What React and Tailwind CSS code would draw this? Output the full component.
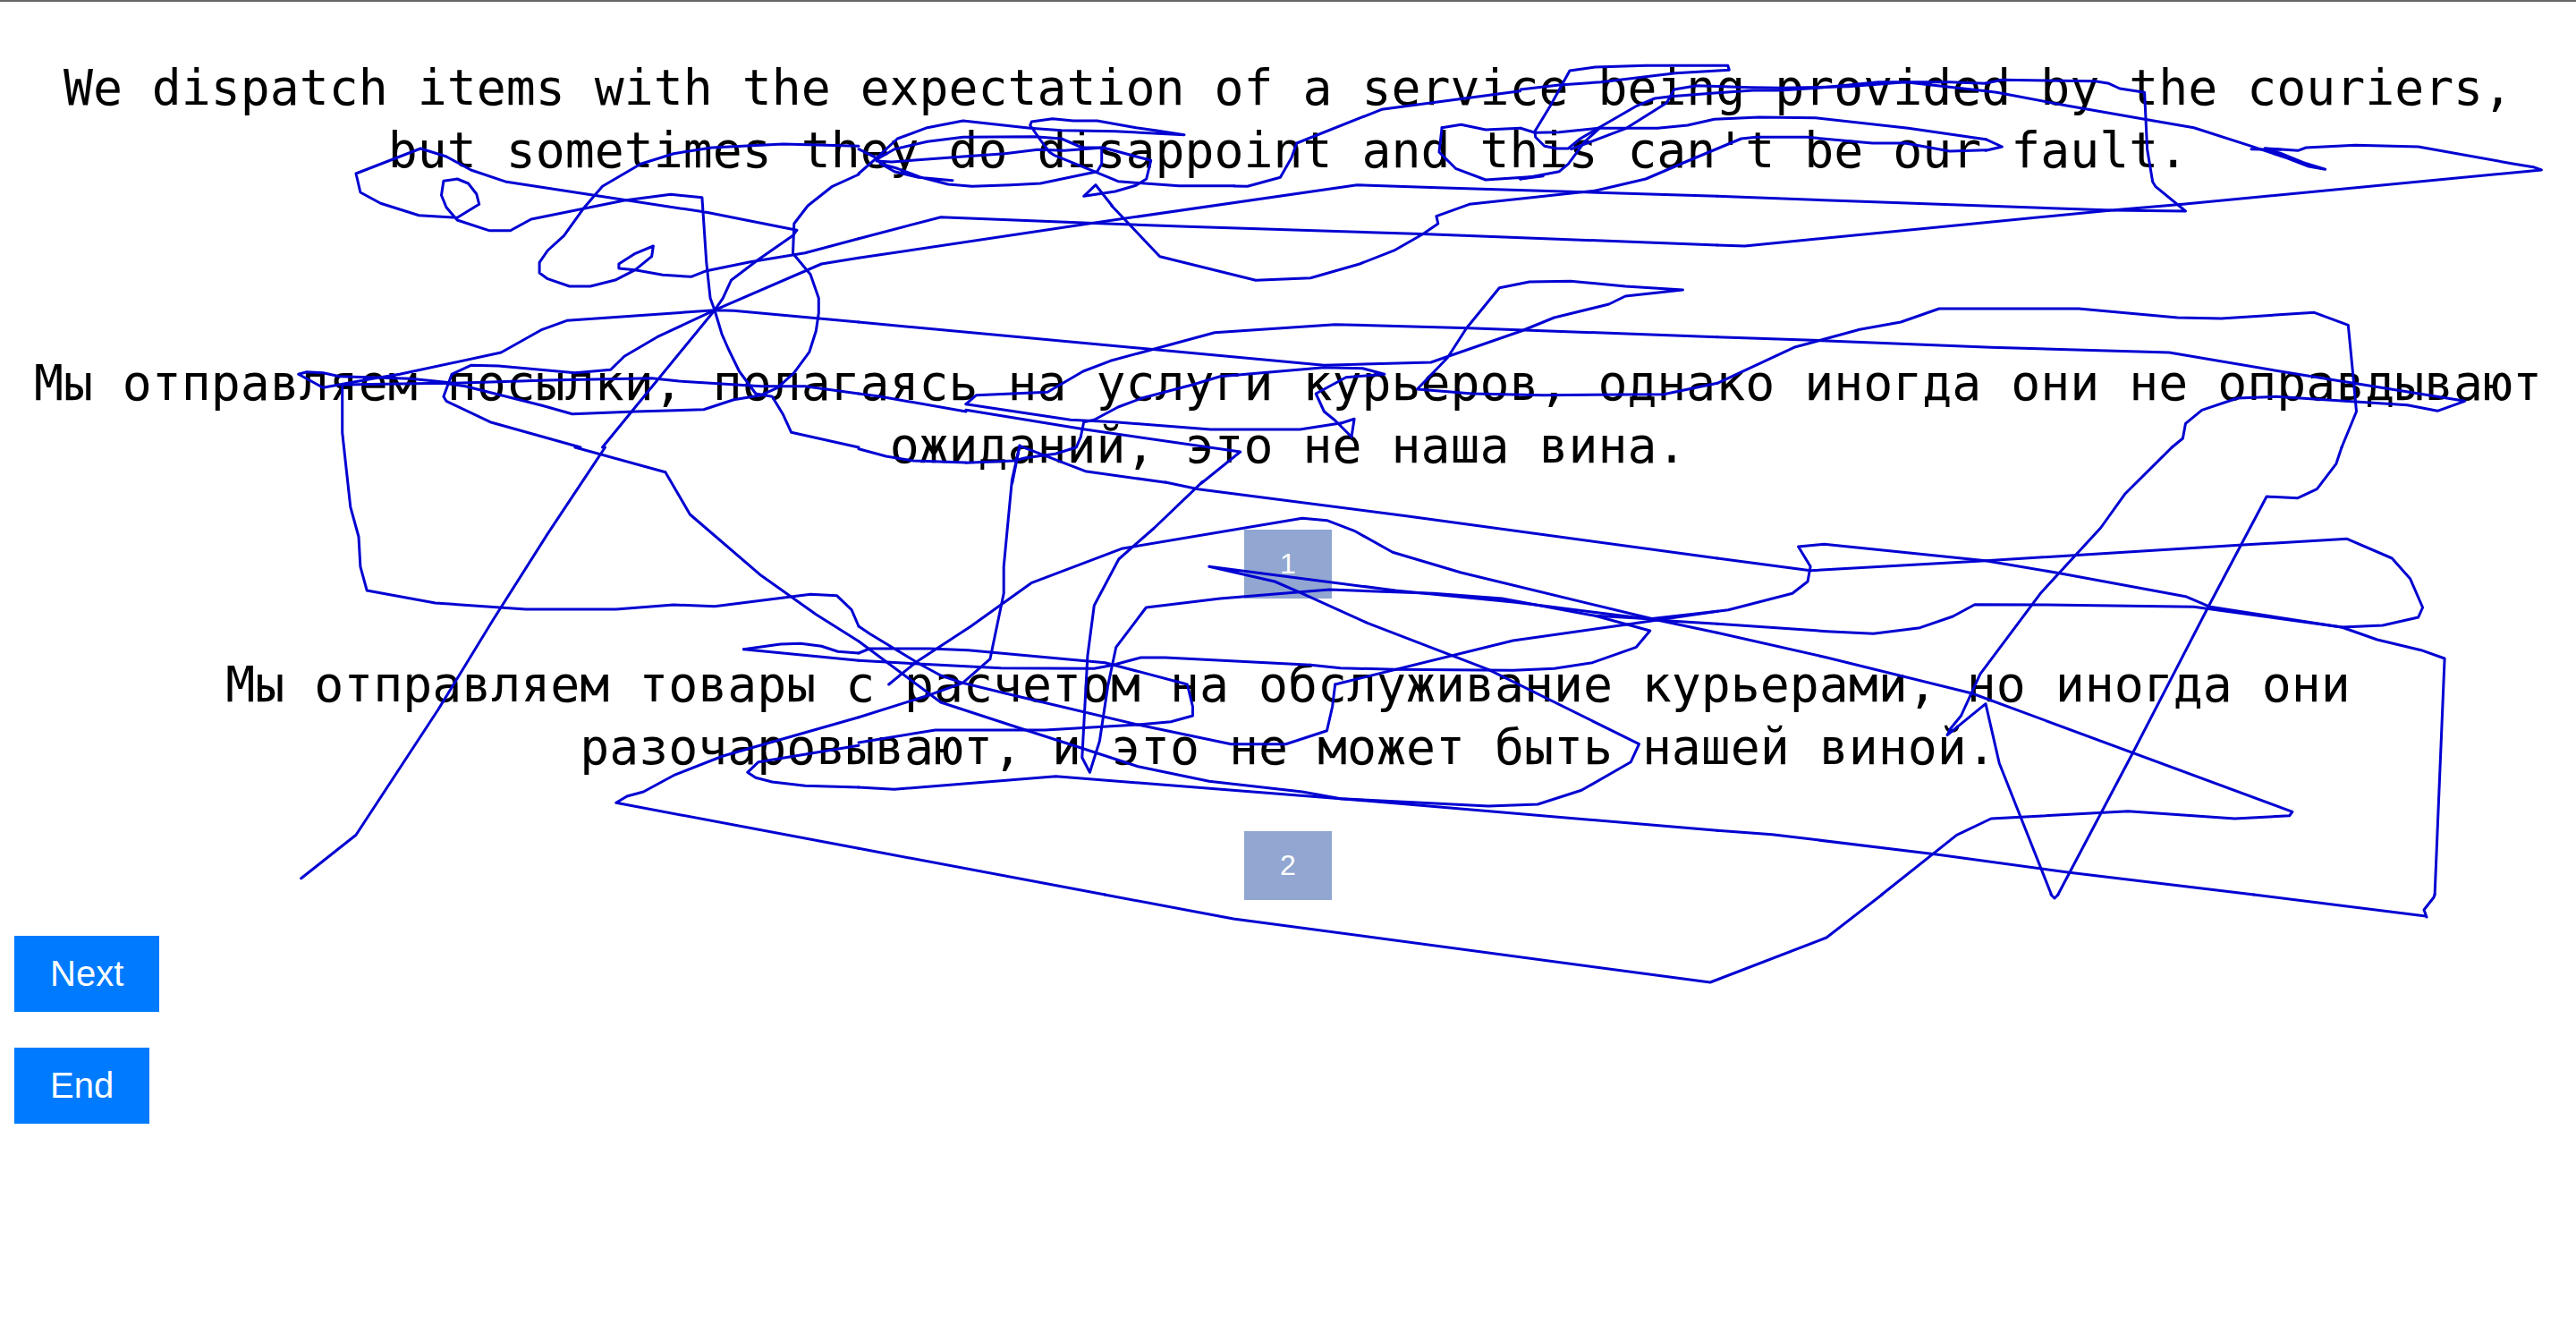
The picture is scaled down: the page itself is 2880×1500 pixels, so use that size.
import React from "react";

// scribble traced from zoomed crops, sx/sy = how much the crop was enlarged
const crop = (ox, oy, sx, sy, lines) =>
  lines.map((pts) => pts.map(([x, y]) => `${(ox + x / sx).toFixed(1)},${(oy + y / sy).toFixed(1)}`).join(" "));

const wide = 1.6333;

const scribble = [
  ...crop(0, 0, wide, 3, [
    [[1455,772],[1290,712],[1085,655],[925,610],[860,570],[815,525],[768,498],[650,582],[658,645],[695,682],[765,722],[835,730],[875,685],[870,650],[855,615],[835,600],[810,607],[806,655],[815,695],[835,738],[893,773],[932,773],[970,735],[1065,700],[1140,672],[1225,652],[1282,662],[1290,880],[1297,1000],[1305,1040],[1318,1120],[1330,1170],[1350,1245],[1380,1320],[1410,1330],[1430,1390],[1445,1450],[1568,1500]],
    [[1568,490],[1430,483],[1300,495],[1230,515],[1170,550],[1100,625],[1065,700],[1030,790],[1000,840],[985,880],[985,915],[1000,935],[1040,960],[1078,960],[1125,938],[1160,905],[1190,860],[1193,825],[1160,850],[1130,885],[1130,900],[1160,905],[1210,922],[1262,928],[1290,908],[1370,878],[1470,848],[1568,800]],
    [[1455,772],[1448,790],[1385,870],[1335,940],[1320,1000],[1305,1040],[1200,1130],[1140,1195],[1115,1240],[1050,1250],[910,1227],[860,1225],[825,1255],[810,1330],[815,1345],[895,1415],[1060,1500]],
    [[1568,585],[1520,625],[1475,690],[1450,750],[1448,850],[1480,920],[1495,1000],[1495,1050],[1490,1110],[1478,1180],[1450,1250],[1420,1300],[1390,1325],[1340,1340],[1285,1373],[1160,1380],[1045,1388],[990,1360],[850,1295],[810,1285],[625,1290],[625,1450],[628,1500]],
    [[1568,1080],[1340,1042],[1305,1040],[1035,1075],[990,1105],[915,1182],[730,1255],[680,1270],[590,1300],[545,1255],[560,1247],[590,1250],[620,1262],[750,1270],[830,1285],[1000,1275],[1190,1268],[1240,1278],[1390,1295],[1470,1295],[1568,1320]],
    [[1305,1040],[1100,1500]],
    [[1305,1040],[1500,885],[1568,865]],
  ]),
  // tangle under "they do disappoint"
  ...crop(960, 120, 3, 3, [
    [[0,222],[60,170],[130,105],[230,68],[350,45],[575,70],[680,77],[860,80],[1092,92],[1000,78],[930,68],[800,45],[720,45],[650,38],[580,48],[575,60],[610,110],[640,150],[655,160],[790,215],[870,248],[960,255],[1075,263],[1260,263]],
    [[60,175],[120,140],[230,115],[350,100],[590,98],[680,105],[750,135],[815,135],[815,190],[800,215],[610,255],[510,260],[380,265],[300,258],[210,235],[130,205],[75,190],[120,215],[200,235],[315,245]],
    [[0,140],[60,170],[75,190]],
    [[60,180],[110,183],[350,165],[490,155],[600,142],[690,145],[820,135],[980,178],[965,240],[930,262],[860,282],[755,298],[795,260],[850,330]],
  ]),
  // tangle around "being provided"
  ...crop(1700, 65, 3, 3, [
    [[0,105],[130,90],[270,80],[520,50],[700,40],[695,25],[420,25],[250,30],[165,42],[100,160],[48,245],[50,265],[80,295],[120,303],[160,303],[200,270],[260,235],[390,160],[450,135],[505,128],[640,118],[780,108],[870,108],[1000,100],[1200,80],[1440,80],[1560,85]],
    [[170,305],[355,235],[490,150],[515,105],[590,92],[770,98],[875,100],[1100,95],[1290,80],[1560,110]],
    [[0,235],[48,250],[130,248],[260,235],[460,235],[560,225],[650,205],[800,198],[990,200],[1300,235],[1560,272]],
    [[0,405],[130,380],[160,355],[215,280],[265,235]],
    [[250,445],[420,405],[560,345],[740,270],[790,265],[960,265],[1180,285],[1290,285],[1440,312],[1560,308]],
  ]),
  // under "услуги"
  ...crop(1080, 430, 3, 3, [
    [[0,262],[160,255],[200,245],[300,232],[370,210],[385,175],[395,125],[430,118],[510,75],[590,45],[760,0]],
    [[155,330],[180,205],[400,290],[670,328]],
    [[0,65],[350,118],[500,125],[820,150],[1120,150],[1260,128]],
    [[0,85],[400,150],[920,225],[790,330]],
  ]),
  ...crop(960, 0, wide, 3, [
    [[0,800],[150,728],[420,748],[600,760],[1040,785],[1568,822]],
    [[0,865],[420,750],[910,620],[1070,630],[1568,658]],
    [[686,624],[710,625],[770,595],[790,530],[800,480],[955,367],[1208,305]],
    [[462,690],[550,860],[725,940],[825,932],[915,885],[980,838],[1030,785],[1058,750],[1055,725],[1115,685],[1344,640]],
    [[1065,428],[1100,418],[1145,435],[1208,430]],
    [[1065,428],[1060,510],[1090,565],[1145,603],[1250,590],[1208,600]],
    [[610,1290],[660,1262],[850,1232],[920,1235],[960,1255],[890,1265],[835,1320],[850,1380],[870,1410],[900,1465],[905,1405],[881,1419]],
    [[196,1355],[215,1325],[345,1315],[410,1245],[460,1210],[650,1115],[870,1088],[1115,1100],[1568,1130]],
    [[0,1080],[850,1225],[1045,1215],[1210,1110],[1270,1065],[1370,1020],[1400,993],[1505,972],[1400,960],[1300,943],[1225,945],[1170,965],[1110,1100],[1075,1200],[1020,1305],[1120,1320],[1250,1325],[1470,1322],[1568,1285]],
    [[0,1320],[40,1330],[196,1380]],
  ]),
  ...crop(1920, 0, wide, 3, [
    [[0,822],[50,825],[720,705],[850,685],[1505,570],[1490,560],[1450,548],[1280,492],[1165,487],[1075,495],[1060,505],[1000,497],[1030,515],[1070,545],[1110,568],[1080,558],[1040,530],[975,490],[870,428],[780,400],[640,355],[510,310],[490,305]],
    [[0,658],[300,678],[720,705],[855,708],[800,625],[795,610],[785,500],[780,310],[735,297],[715,280],[690,272],[520,268],[490,279]],
    [[975,500],[1030,502]],
    [[490,505],[520,492],[490,467]],
    [[0,1285],[140,1165],[260,1105],[335,1080],[405,1035],[660,1035],[840,1065],[920,1068],[1090,1048],[1152,1090],[1160,1240],[1167,1380],[1140,1500]],
    [[0,1130],[190,1142],[500,1165],[825,1182],[1060,1255],[1365,1345],[1315,1378],[1260,1358],[1020,1330],[950,1335],[885,1375],[855,1420],[850,1470],[830,1500]],
  ]),
  ...crop(0, 500, wide, 3, [
    [[1105,0],[1000,290],[900,580],[800,880],[650,1300],[550,1445]],
    [[628,0],[640,200],[655,300],[658,400],[670,480],[795,522],[960,543],[1125,543],[1230,528],[1305,533],[1480,493],[1528,497],[1555,545],[1568,600]],
    [[1050,0],[1215,83],[1260,225],[1390,430],[1490,560],[1568,650]],
    [[1358,677],[1425,660],[1462,658],[1500,667],[1530,685],[1568,690]],
    [[1358,677],[1568,715]],
    [[1568,905],[1320,1035],[1230,1100],[1175,1155],[1145,1170],[1125,1192],[1568,1345]],
    [[1568,1000],[1385,1055],[1365,1090],[1380,1108],[1410,1122],[1470,1135],[1568,1140]],
  ]),
  ...crop(960, 500, wide, 3, [
    [[0,5],[50,30],[100,45],[196,51]],
    [[294,-6],[280,110],[265,400],[265,490],[240,710],[190,790],[130,830],[0,905]],
    [[560,117],[620,140],[1000,230],[1568,372]],
    [[628,115],[540,270],[475,375],[430,530],[418,700],[408,1040],[422,1090],[440,985],[455,800],[470,670],[525,537],[660,507],[860,477],[1050,490],[1175,507],[1345,565],[1445,575],[1568,550]],
    [[55,795],[105,720],[205,600],[315,455],[480,340],[810,238],[855,245],[905,280],[975,352],[1100,420],[1460,580],[1568,622]],
    [[0,600],[20,625],[110,725],[150,765],[190,790],[280,830],[510,930],[570,920],[610,900],[610,870],[600,795],[450,722],[200,680],[130,675],[20,675],[0,690]],
    [[0,715],[100,725],[260,740],[430,742],[465,730],[515,705],[560,705],[825,730],[880,740],[980,745],[1195,748],[1270,742],[1340,722],[1420,670],[1445,615],[1345,565]],
    [[0,650],[150,855],[300,945],[410,1010],[510,1070],[640,1120],[810,1155],[880,1178],[1150,1203],[1240,1197],[1320,1150],[1410,1055],[1425,995],[1150,745],[930,590],[810,490],[760,450],[640,400],[980,480],[1200,520],[1460,580],[1568,592]],
    [[870,795],[865,870],[855,950],[780,995],[680,995],[510,930],[340,948],[140,948],[0,990]],
    [[870,795],[1195,648],[1400,595],[1568,550]],
    [[0,1140],[65,1147],[360,1103],[880,1178],[1568,1285]],
    [[0,1345],[450,1500]],
  ]),
  ...crop(1920, 500, wide, 3, [
    [[0,550],[20,545],[137,490],[165,450],[170,400],[148,333],[195,325],[490,380],[625,422],[780,475],[855,500],[900,535],[1140,603],[1205,645],[1285,680],[1328,708],[1310,1500]],
    [[0,622],[200,705],[465,825],[1050,1222],[1045,1235],[945,1245],[750,1220],[500,1245],[437,1300],[300,1500]],
    [[0,592],[200,617],[285,625],[370,605],[430,567],[470,527],[600,528],[870,535],[1140,603],[1215,597],[1280,570],[1288,537],[1265,440],[1232,372],[1150,307],[960,327],[490,380],[170,413],[0,372]],
    [[830,0],[745,155],[700,270],[590,490],[480,760],[445,900],[425,945],[420,965],[490,860],[515,1060],[610,1500]],
    [[1140,0],[1130,55],[1095,140],[1060,170],[1003,165],[895,540],[760,1020],[622,1500]],
    [[0,1285],[100,1298],[400,1365],[640,1425],[980,1500]],
  ]),
  // bottom strip, already in page pixels
  "1235,1000 1379,1027 1912,1098 2042,1048 2104,1000",
  "2293,1000 2297,1004 2301,1000",
  "2520,1000 2712,1024",
  "2722,1000 2721,1003 2710,1017 2713,1025",
];

export default function App() {
  const copy = "w-full px-4 text-center text-black font-['DejaVu_Sans_Mono',monospace] text-[54.8px] leading-[70px]";
  const badge = "bg-[#91a6d1] px-10 py-5 text-[32px] leading-[37px] text-white font-['Liberation_Sans',sans-serif]";
  const action = "bg-[#007bff] px-10 py-5 text-[40px] leading-[45px] text-white";

  return (
    <div className="relative h-[1500px] w-[2880px] overflow-hidden bg-white border-t-2 border-[#666666]">
      <div className="flex flex-col items-center pt-[61px]">
        <p className={copy}>
          We dispatch items with the expectation of a service being provided by the couriers, but sometimes they do disappoint and this can't be our fault.
        </p>
        <p className={`mt-[190px] ${copy}`}>
          Мы отправляем посылки, полагаясь на услуги курьеров, однако иногда они не оправдывают ожиданий, это не наша вина.
        </p>
        <div className={`mt-[59px] ${badge}`}>1</div>
        <p className={`mt-[61px] ${copy}`}>
          Мы отправляем товары с расчетом на обслуживание курьерами, но иногда они разочаровывают, и это не может быть нашей виной.
        </p>
        <div className={`mt-[59px] ${badge}`}>2</div>
      </div>

      <div className="mt-10 ml-4 flex flex-col items-start gap-10 font-['Liberation_Sans',sans-serif]">
        <button className={action}>Next</button>
        <button className={action}>End</button>
      </div>

      {/* freehand drawing on top of everything */}
      <svg className="absolute -top-0.5 left-0 h-[1500px] w-[2880px]" viewBox="0 0 2880 1500" fill="none">
        {scribble.map((pts, i) => (
          <polyline key={i} points={pts} stroke="#0000d2" strokeWidth="3" strokeLinejoin="round" strokeLinecap="round" />
        ))}
      </svg>
    </div>
  );
}
